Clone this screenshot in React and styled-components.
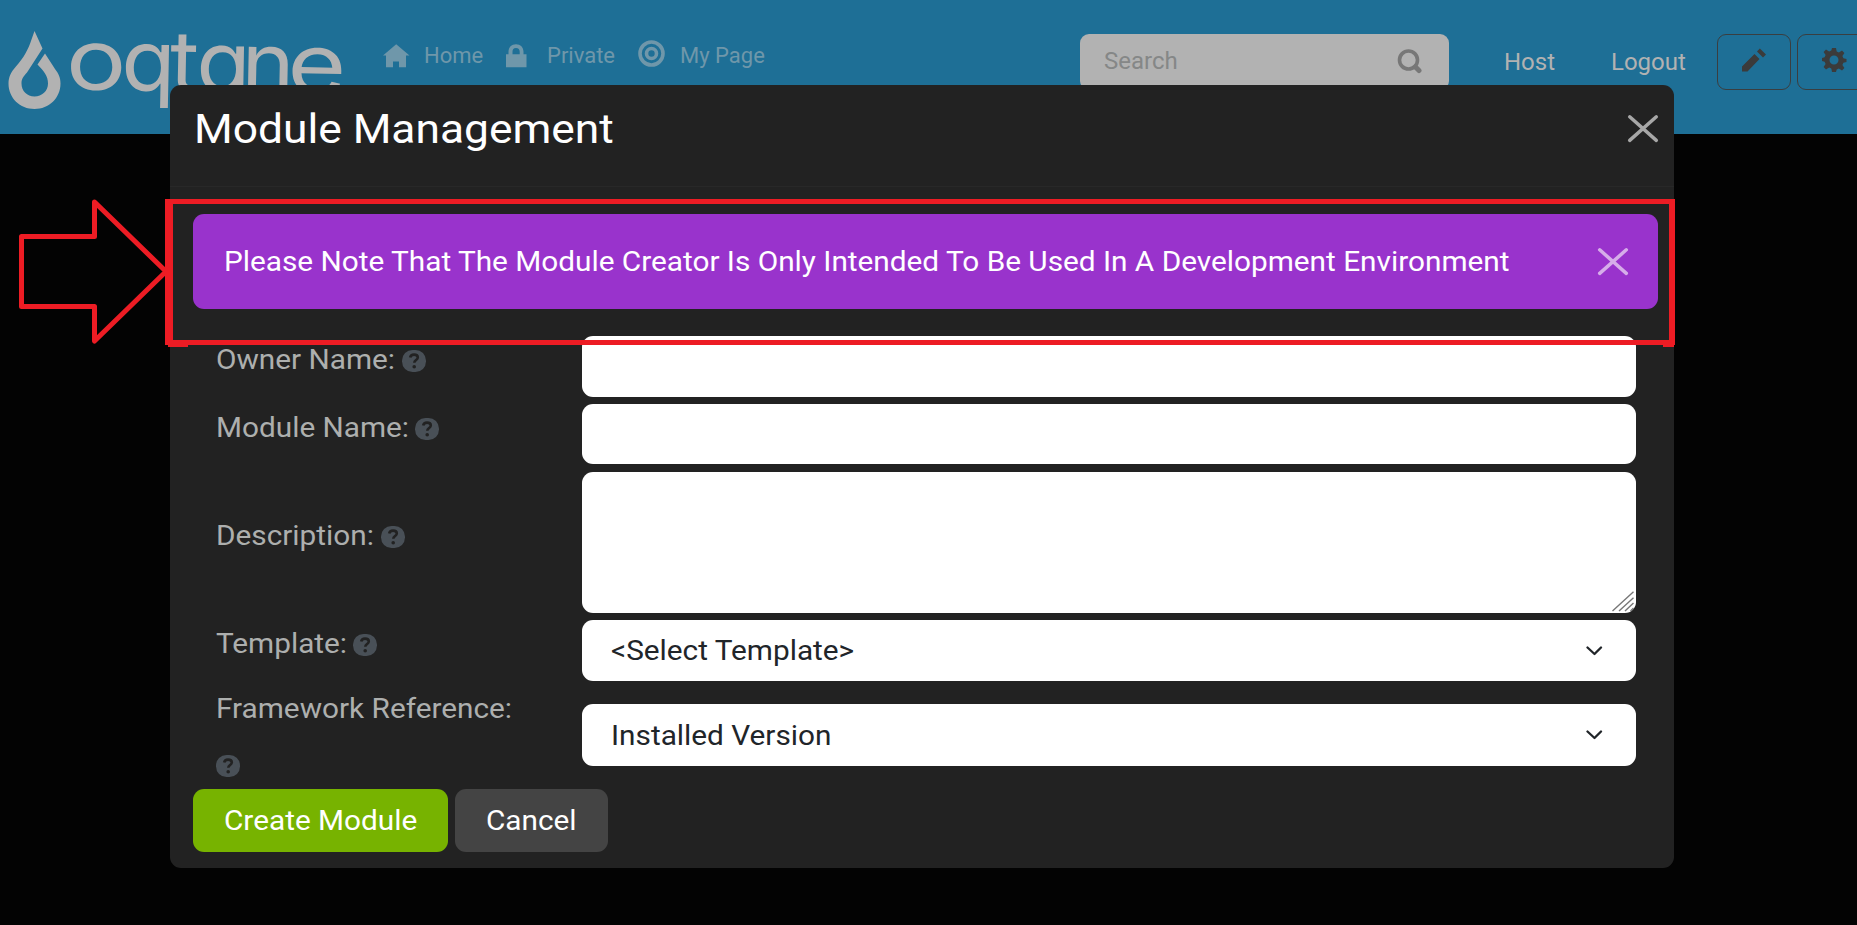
import React from "react";
import styled, { createGlobalStyle } from "styled-components";

const GlobalStyle = createGlobalStyle`
  *, *::before, *::after { box-sizing: border-box; }
  html, body { margin: 0; height: 100%; overflow: hidden; background: #030303; }
  body { font-family: Roboto, "Liberation Sans", sans-serif; }
  svg { display: block; flex: none; }
`;

const Page = styled.div`
  position: relative;
  width: 100%;
  height: 925px;
  overflow: hidden;
  background: #030303;
`;

const TopBar = styled.header`
  display: flex;
  align-items: flex-start;
  height: 134px;
  background: #1e6f96;
`;

const Logo = styled.svg`
  width: 350px;
  height: 134px;
`;

const LogoLetter = styled.text`
  font: 400 84px Inter, sans-serif;
  font-feature-settings: "cv11";
`;

const Nav = styled.nav`
  display: flex;
  align-items: center;
  height: 40px;
  margin: 36px 0 0 33px;
  color: #6f97aa;
`;

const NavItem = styled.a`
  display: flex;
  align-items: center;
  font-size: 22px;
  line-height: 40px;
  width: ${(p) => p.$width}px;
`;

const NavIcon = styled.svg`
  width: 27px;
  height: 27px;
  margin-top: ${(p) => p.$drop || 0}px;
  margin-right: ${(p) => p.$gap}px;
`;

const SearchBox = styled.div`
  display: flex;
  align-items: center;
  justify-content: space-between;
  width: 369px;
  height: 56px;
  margin: 34px 0 0 auto;
  padding: 0 26px 2px 24px;
  border-radius: 9px;
  background: #b2b2b2;
  color: #858787;
  font-size: 24px;
`;

const Account = styled.div`
  display: flex;
  width: 408px;
  flex: none;
  padding: 34px 0 0 55px;
  color: #b2b2b2;
  font-size: 24px;
  line-height: 56px;
`;

const AccountLink = styled.a`
  width: ${(p) => p.$width}px;
  flex: none;
`;

const ToolButton = styled.button`
  display: flex;
  justify-content: center;
  flex: none;
  width: 74px;
  height: 56px;
  margin-right: 6px;
  padding: 12px 0 0;
  border: 1px solid #3a3e40;
  border-radius: 9px;
  background: transparent;
  color: #3b3b3b;
`;

const Dialog = styled.section`
  position: absolute;
  left: 170px;
  top: 85px;
  width: 1504px;
  height: 783px;
  border-radius: 11px;
  background: #222222;
`;

const DialogHeader = styled.div`
  display: flex;
  justify-content: space-between;
  height: 102px;
  padding: 14px 15px 0 24px;
  border-bottom: 1px solid #282828;
  color: #fff;
`;

const CloseButton = styled.button`
  display: flex;
  align-items: center;
  justify-content: center;
  flex: none;
  width: 32px;
  height: 32px;
  margin: ${(p) => p.$top || 0}px 0 0;
  padding: 0;
  border: 0;
  background: none;
  color: ${(p) => p.$color};
`;

const DialogBody = styled.div`
  padding: 27px 16px 0 23px;
`;

/* Text set slightly wider than its natural proportions. */
const Wide = styled.span`
  display: inline-block;
  white-space: nowrap;
  transform: scaleX(${(p) => p.$scale || 1.063});
  transform-origin: left center;
  width: ${(p) => (p.$width ? p.$width + "px" : "auto")};
`;

const Title = styled.h1`
  margin: 0;
  font-size: 40px;
  font-weight: 400;
  line-height: 61px;
`;

const Alert = styled.div`
  display: flex;
  align-items: center;
  justify-content: space-between;
  height: 95px;
  padding: 0 29px 0 31px;
  border-radius: 11px;
  background: #9933cc;
  color: #fff;
  font-size: 28px;
`;

const Form = styled.form`
  display: flex;
  flex-direction: column;
  padding: 27px 22px 0 23px;
`;

const Row = styled.div`
  display: grid;
  grid-template-columns: 366px 1fr;
  align-items: center;
  height: ${(p) => p.$height}px;
  margin-bottom: ${(p) => p.$gap}px;
`;

const Label = styled.label`
  display: flex;
  flex-wrap: wrap;
  align-items: center;
  column-gap: 8px;
  row-gap: ${(p) => (p.$tall ? 27 : 0)}px;
  width: 310px;
  padding-bottom: ${(p) => (p.$tall ? 2 : 13)}px;
  color: #adafae;
  font-size: 28px;
  line-height: 34px;
`;

const HelpIcon = styled.svg`
  width: 24px;
  height: 22px;
  margin-top: 2px;
`;

const Field = styled.div`
  display: flex;
  align-items: ${(p) => (p.$resizable ? "flex-end" : "center")};
  justify-content: ${(p) => (p.$resizable ? "flex-end" : "space-between")};
  height: ${(p) => p.$height}px;
  margin-top: ${(p) => p.$shift || 0}px;
  padding: ${(p) => (p.$resizable ? "0 1px 1px 0" : "0 33px 0 29px")};
  border-radius: 11px;
  background: #fff;
  color: #212529;
  font-size: 28px;
`;

const Actions = styled.div`
  display: flex;
  gap: 7px;
`;

const Button = styled.button`
  width: ${(p) => p.$width}px;
  height: 63px;
  padding: 0 0 1px 31px;
  border: 0;
  border-radius: 11px;
  background: ${(p) => p.$color};
  color: #fff;
  font: 400 28px Roboto, "Liberation Sans", sans-serif;
  text-align: left;
`;

const Annotation = styled.svg`
  position: absolute;
  left: 0;
  top: 190px;
  width: 1857px;
  height: 170px;
  pointer-events: none;
`;

const WORDMARK = [
  { char: "o", x: 65.5, y: 89, stretch: 1.2 },
  { char: "q", x: 121, y: 90, stretch: 1.05 },
  { char: "t", x: 169.5, y: 91, stretch: 1.05 },
  { char: "a", x: 196, y: 91.5, stretch: 1.05 },
  { char: "n", x: 241, y: 92.5, stretch: 1.07 },
  { char: "e", x: 287, y: 93.5, stretch: 1.2 },
];

function Cross() {
  return (
    <svg width="32" height="30" viewBox="0 0 32 30" fill="none" stroke="currentColor" strokeWidth="3.5" strokeLinecap="round">
      <path d="M2.7 2.8 29.3 26.4M29.3 2.8 2.7 26.4" />
    </svg>
  );
}

function Help() {
  return (
    <HelpIcon viewBox="0 0 24 22">
      <rect width="24" height="22" rx="10.5" fill="#495057" />
      <path d="M8.2 7.6C8.6 5.4 10.1 4.6 12 4.6c2.2 0 3.8 1.1 3.8 2.9 0 2.4-3.5 2.6-3.5 5.2" fill="none" stroke="#222" strokeWidth="2.6" />
      <circle cx="12.2" cy="16.7" r="1.8" fill="#222" />
    </HelpIcon>
  );
}

function Chevron() {
  return (
    <svg width="17" height="10" viewBox="0 0 17 10" fill="none" stroke="#212529" strokeWidth="2.3" strokeLinecap="round" strokeLinejoin="round">
      <path d="M1.5 1.5 8.5 8 15 1.5" />
    </svg>
  );
}

function Grip() {
  return (
    <svg width="23" height="21" viewBox="0 0 23 21" stroke="#777" strokeWidth="1.4">
      <path d="M.5 20 21.5.8M7 20 21.5 6.8M13 20 21.5 12M18.5 20 21.5 17" />
    </svg>
  );
}

function FormRow({ label, labelWidth, height, gap, tall, fieldHeight, resizable, children }) {
  return (
    <Row $height={height} $gap={gap}>
      <Label $tall={tall}>
        <Wide $width={labelWidth}>{label}</Wide>
        <Help />
      </Label>
      <Field $height={fieldHeight || height} $shift={tall ? -1 : 0} $resizable={resizable}>{children}</Field>
    </Row>
  );
}

export default function App() {
  return (
    <Page>
      <GlobalStyle />
      <TopBar>
        <Logo viewBox="0 0 350 134" fill="#b2b2b2">
          <path d="M34.500 31 42.500 48.500 27 72.500C23 77 21.500 79 21.500 83.500 21.500 91 27 96.500 34.500 96.500S48 91 48 83.500C48 76 44 71.500 37.500 64.500L45 53.500 55 69C58.500 73.500 60.500 77.500 60.500 83.500 60.500 98 49 109 34.500 109S8.500 98 8.500 83.500C8.500 77 11 72 15.500 67 24 57.500 28.500 49 31.500 39.500Z" />
          {WORDMARK.map(({ char, x, y, stretch }) => (
            <LogoLetter key={char} transform={`translate(${x} ${y}) rotate(1.1) scale(${stretch} 1)`}>{char}</LogoLetter>
          ))}
        </Logo>
        <Nav>
          <NavItem $width={122}>
            <NavIcon $gap={14} viewBox="0 0 27 27" fill="currentColor">
              <path d="M13.200 1.300 26.500 12.500H23V24.300H16V18.500H10V24.300H3V12.500H0Z" />
            </NavIcon>
            Home
          </NavItem>
          <NavItem $width={133}>
            <NavIcon $gap={15} viewBox="0 0 27 27" fill="currentColor">
              <path d="M1 11.300H3.500V8.800C3.500 4.300 6.500 1.300 11 1.300S18.500 4.300 18.500 8.800V11.300H21.500V24.300H1ZM7.500 11.300H14.700V8.800C14.700 6.300 13.500 5 11 5S7.500 6.300 7.500 8.800Z" fillRule="evenodd" />
            </NavIcon>
            Private
          </NavItem>
          <NavItem $width={140}>
            <NavIcon $gap={15} $drop={-5} viewBox="0 0 27 27" fill="none" stroke="currentColor" strokeWidth="3.6">
              <circle cx="13.500" cy="13.500" r="11.500" />
              <circle cx="13.500" cy="13.500" r="5" />
            </NavIcon>
            My Page
          </NavItem>
        </Nav>
        <SearchBox>
          <span>Search</span>
          <svg width="26" height="26" viewBox="0 0 26 26" fill="none" stroke="#777" strokeLinecap="round">
            <circle cx="11.500" cy="12" r="9" strokeWidth="3.600" />
            <path d="M18.500 19 22 22.500" strokeWidth="5" />
          </svg>
        </SearchBox>
        <Account>
          <AccountLink $width={107}>Host</AccountLink>
          <AccountLink $width={106}>Logout</AccountLink>
          <ToolButton>
            <svg width="26" height="26" viewBox="0 0 26 26" fill="currentColor">
              <path d="M1 19.500 13.500 7 18.500 12 6.500 24.500H1ZM16 4.500 18.800 1.500 25 7.500 22 10.500Z" />
            </svg>
          </ToolButton>
          <ToolButton>
            <svg width="26" height="26" viewBox="0 0 26 26">
              <g fill="currentColor">
                <path d="m11 1h4l.7 3.600 2.200 1 3.100-2 2.400 2.400-2 3.100 1 2.200 3.100.7v3l-3.100.7-1 2.200 2 3.100-2.400 2.400-3.100-2-2.200 1L15 25h-4l-.7-3.600-2.200-1-3.100 2L2.600 20l2-3.100-1-2.200L1 14v-3l2.600-.7 1-2.200-2-3.100L5 2.600l3.100 2 2.200-1Zm2 7.500a4.500 4.500 0 1 0 0 9 4.500 4.500 0 1 0 0-9Z" fillRule="evenodd" />
              </g>
            </svg>
          </ToolButton>
        </Account>
      </TopBar>

      <Dialog>
        <DialogHeader>
          <Title><Wide $scale={1.108}>Module Management</Wide></Title>
          <CloseButton $top={14} $color="#a7a7a7"><Cross /></CloseButton>
        </DialogHeader>
        <DialogBody>
          <Alert>
            <Wide>Please Note That The Module Creator Is Only Intended To Be Used In A Development Environment</Wide>
            <CloseButton $color="#d6ade9"><Cross /></CloseButton>
          </Alert>
          <Form>
            <FormRow label="Owner Name:" labelWidth={178} height={61} gap={7} />
            <FormRow label="Module Name:" labelWidth={191} height={60} gap={8} />
            <FormRow label="Description:" labelWidth={157} height={141} gap={7} resizable><Grip /></FormRow>
            <FormRow label="Template:" labelWidth={129} height={61} gap={1}>
              <Wide>&lt;Select Template&gt;</Wide><Chevron />
            </FormRow>
            <FormRow label="Framework Reference:" labelWidth={300} height={107} gap={0} tall fieldHeight={62}>
              <Wide>Installed Version</Wide><Chevron />
            </FormRow>
          </Form>
          <Actions>
            <Button $width={255} $color="#77b300"><Wide>Create Module</Wide></Button>
            <Button $width={153} $color="#444444"><Wide>Cancel</Wide></Button>
          </Actions>
        </DialogBody>
      </Dialog>

      <Annotation viewBox="0 190 1857 170" fill="none" stroke="#ed1c24" strokeWidth="5" strokeLinejoin="round">
        <path d="M21.500 236.500H94.500V202L166 271.500 94.500 341V306.500H21.500Z" />
        <path d="M165 199H1675V345H1674V347H1663V345H188V347H168V345H165ZM173 204V340H1669V204Z" fill="#ed1c24" fillRule="evenodd" stroke="none" />
      </Annotation>
    </Page>
  );
}
